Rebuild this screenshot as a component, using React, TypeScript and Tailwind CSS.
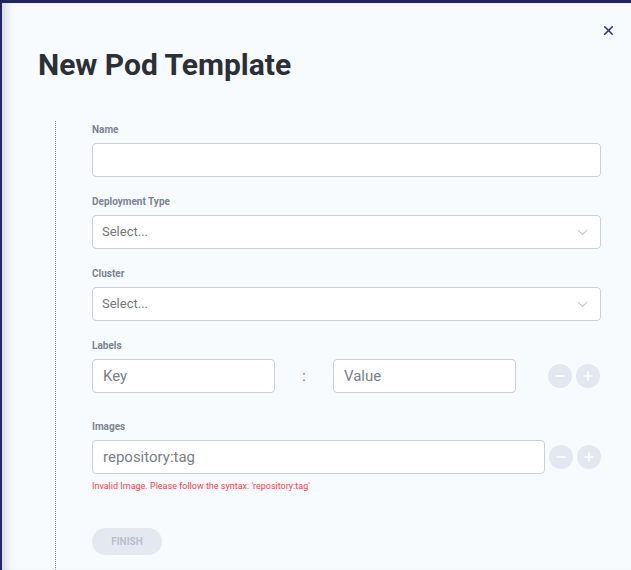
import { X, ChevronDown, Minus, Plus } from "lucide-react";

const font = { fontFamily: "Roboto, 'Noto Sans', sans-serif" };

function Label({ children }: { children: string }) {
  return <div className="h-[14px] text-[10px] leading-[14px] font-bold text-[#7b8392]">{children}</div>;
}

function TextInput({ placeholder, className = "" }: { placeholder?: string; className?: string }) {
  return (
    <input
      placeholder={placeholder}
      className={`h-[34px] rounded-[4px] border border-[#cbcfd6] bg-white px-[10px] text-[15px] text-[#333] placeholder:text-[#7a7f87] outline-none ${className}`}
    />
  );
}

function Select() {
  return (
    <div className="flex h-[34px] items-center justify-between rounded-[4px] border border-[#cbcfd6] bg-white pl-[9px] pr-[9px]">
      <span className="text-[13px] text-[#777]">Select...</span>
      <ChevronDown size={17} strokeWidth={1.5} className="text-[#c3c3c3]" />
    </div>
  );
}

function RoundBtn({ plus }: { plus?: boolean }) {
  return (
    <button className="flex h-[24px] w-[24px] items-center justify-center rounded-full bg-[#e3e8f0] text-white">
      {plus ? <Plus size={14} strokeWidth={2.5} /> : <Minus size={14} strokeWidth={2.5} />}
    </button>
  );
}

export default function App() {
  return (
    <div style={font} className="h-[570px] w-full bg-[#1f2668] pl-[2px] pt-[3px]">
      <div className="relative h-full bg-[#f7fbfe] shadow-[inset_10px_0_8px_-6px_rgba(40,50,80,0.18)]">
        <button className="absolute right-[15px] top-[20px] text-[#2b3585]">
          <X size={15} strokeWidth={2.6} />
        </button>
        <h1 className="pl-[36px] pt-[43px] text-[30px] leading-[38px] font-bold text-[#2c2f36]">New Pod Template</h1>
        <div className="ml-[53px] mt-[37px] h-[449px] border-l border-dotted border-[#8b909a] pl-[36px] pr-[30px] pt-[2px]">
          <Label>Name</Label>
          <TextInput className="mt-[6px] w-full" />

          <div className="mt-[18px]">
            <Label>Deployment Type</Label>
            <div className="mt-[6px]">
              <Select />
            </div>
          </div>

          <div className="mt-[18px]">
            <Label>Cluster</Label>
            <div className="mt-[6px]">
              <Select />
            </div>
          </div>

          <div className="mt-[18px]">
            <Label>Labels</Label>
            <div className="mt-[6px] flex items-center">
              <TextInput placeholder="Key" className="w-[183px]" />
              <div className="w-[58px] text-center text-[14px] text-[#666]">:</div>
              <TextInput placeholder="Value" className="w-[183px]" />
              <div className="ml-[32px] flex gap-1">
                <RoundBtn />
                <RoundBtn plus />
              </div>
            </div>
          </div>

          <div className="mt-[27px]">
            <Label>Images</Label>
            <div className="mt-[6px] flex items-center gap-1">
              <TextInput placeholder="repository:tag" className="min-w-0 flex-1" />
              <div className="flex gap-1">
                <RoundBtn />
                <RoundBtn plus />
              </div>
            </div>
            <div className="mt-[6px] text-[9px] leading-[12px] text-[#f24848]">
              Invalid Image. Please follow the syntax: 'repository:tag'
            </div>
          </div>

          <button className="mt-[36px] h-[27px] w-[70px] rounded-full bg-[#e4e9f1] text-[10px] font-bold text-[#b7c0cc]">
            FINISH
          </button>
        </div>
      </div>
    </div>
  );
}
